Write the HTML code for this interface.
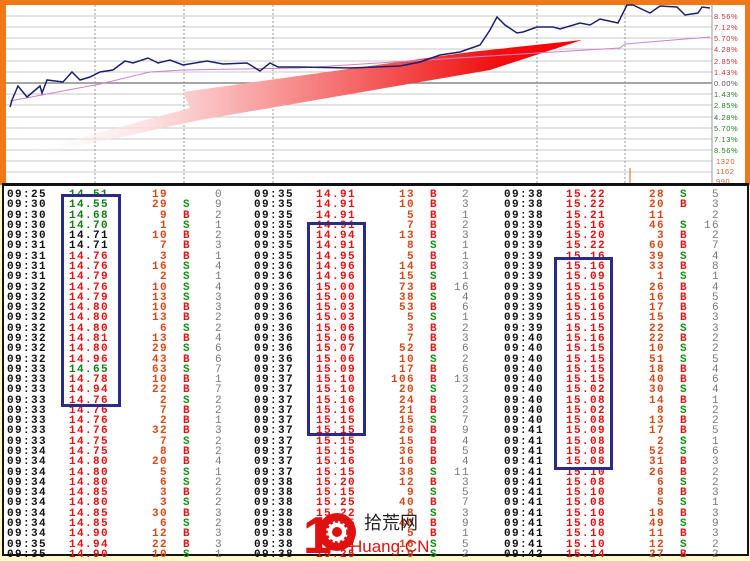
<!DOCTYPE html>
<html><head><meta charset="utf-8"><style>
*{margin:0;padding:0;box-sizing:border-box}
body{width:750px;height:559px;background:#fff8c8;position:relative;overflow:hidden;font-family:"Liberation Mono",monospace}
#chart{position:absolute;left:0;top:0;width:750px;height:185px;background:#fff;border-top:5px solid #f07818;border-left:6px solid #f07818;border-right:5px solid #f07818}
#tbl{position:absolute;left:2px;top:183px;width:747px;height:373px;background:#fff;border:2px solid #111;border-top:3px solid #111}
.col{position:absolute;top:4px}
.r{position:relative;height:10.29px;font-size:11px;line-height:10.29px;font-weight:bold;letter-spacing:1.4px;white-space:nowrap}
.r span{position:absolute;top:0}
.t{left:0;color:#111}
.p{left:62px;color:#e81010}
.g{color:#108010}.k{color:#111}
.v{right:auto;left:128px;width:33px;text-align:right;color:#d84818}
.b{left:176px}
.B{color:#e01818}.S{color:#109010}
.c{left:200px;width:16px;text-align:right;color:#777;font-weight:normal}
.box{position:absolute;border:3px solid #2a2a8c}
</style></head><body>
<div id="chart"></div>
<svg style="position:absolute;left:0;top:0" width="750" height="185">
<defs><linearGradient id="ar" x1="0" y1="0" x2="1" y2="0"><stop offset="0" stop-color="#fff" stop-opacity="0"/><stop offset="0.3" stop-color="#fbd0d0"/><stop offset="0.85" stop-color="#f01010"/><stop offset="1" stop-color="#ff0000"/></linearGradient></defs>
<g stroke="#c8c8c8" stroke-width="1">
<line x1="6" y1="16" x2="712" y2="16"/><line x1="6" y1="27" x2="712" y2="27"/><line x1="6" y1="38" x2="712" y2="38"/><line x1="6" y1="49" x2="712" y2="49"/><line x1="6" y1="61" x2="712" y2="61"/><line x1="6" y1="72" x2="712" y2="72"/>
<line x1="6" y1="94" x2="712" y2="94"/><line x1="6" y1="105" x2="712" y2="105"/><line x1="6" y1="117" x2="712" y2="117"/><line x1="6" y1="128" x2="712" y2="128"/><line x1="6" y1="139" x2="712" y2="139"/><line x1="6" y1="150" x2="712" y2="150"/><line x1="6" y1="161" x2="712" y2="161"/><line x1="6" y1="172" x2="712" y2="172"/>
</g>
<line x1="6" y1="83" x2="712" y2="83" stroke="#888" stroke-width="1.5"/>
<g stroke="#999" stroke-dasharray="2,2"><line x1="95" y1="5" x2="95" y2="183"/><line x1="184" y1="5" x2="184" y2="183"/><line x1="273" y1="5" x2="273" y2="183"/><line x1="537" y1="5" x2="537" y2="183"/><line x1="625" y1="5" x2="625" y2="183"/></g>
<line x1="712" y1="5" x2="712" y2="183" stroke="#999"/>
<polygon points="12,156 190,108 183,92 470,52 582,40 490,70 200,120 14,160" fill="url(#ar)"/>
<polyline fill="none" stroke="#d080d0" stroke-width="1" points="10,101 47,94 100,84 150,72 183,70 300,68 537,53 620,48 625,44 710,37"/>
<polyline fill="none" stroke="#1a2070" stroke-width="1.5" points="10,107 12,100 18,86 27,97 40,86 42,93 47,80 63,82 72,72 80,80 90,77 100,72 113,70 125,61 133,63 148,58 158,63 170,60 183,65 207,61 223,64 247,63 260,71 270,63 278,67 300,67 350,68 400,66 420,62 440,55 460,52 480,45 490,30 497,17 505,25 517,33 523,32 537,27 553,27 560,29 580,23 590,25 600,19 618,23 627,5 633,5 650,13 660,6 677,7 685,15 698,13 702,7 710,8"/>
<line x1="630" y1="168" x2="630" y2="183" stroke="#e06020"/>
<g font-family="Liberation Sans,sans-serif" font-size="7.5" letter-spacing="0.6">
<text x="714" y="19" fill="#d03030">8.56%</text><text x="714" y="30" fill="#d03030">7.12%</text><text x="714" y="41" fill="#d03030">5.70%</text><text x="714" y="52" fill="#d03030">4.28%</text><text x="714" y="64" fill="#d03030">2.85%</text><text x="714" y="75" fill="#d03030">1.43%</text><text x="714" y="86" fill="#555">0.00%</text>
<text x="714" y="97" fill="#208020">1.43%</text><text x="714" y="108" fill="#208020">2.85%</text><text x="714" y="120" fill="#208020">4.28%</text><text x="714" y="131" fill="#208020">5.70%</text><text x="714" y="142" fill="#208020">7.13%</text><text x="714" y="153" fill="#208020">8.56%</text>
<text x="716" y="164" fill="#d06030">1320</text><text x="716" y="174" fill="#d06030">1162</text><text x="716" y="184" fill="#d06030">990</text>
</g>
</svg>
<div id="tbl">
<div class="col" style="left:3px">
<div class="r"><span class="t">09:25</span><span class="p g">14.51</span><span class="v">19</span><span class="b"></span><span class="c">0</span></div>
<div class="r"><span class="t">09:30</span><span class="p g">14.55</span><span class="v">29</span><span class="b S">S</span><span class="c">9</span></div>
<div class="r"><span class="t">09:30</span><span class="p g">14.68</span><span class="v">9</span><span class="b B">B</span><span class="c">2</span></div>
<div class="r"><span class="t">09:30</span><span class="p g">14.70</span><span class="v">1</span><span class="b S">S</span><span class="c">1</span></div>
<div class="r"><span class="t">09:30</span><span class="p k">14.71</span><span class="v">10</span><span class="b B">B</span><span class="c">2</span></div>
<div class="r"><span class="t">09:31</span><span class="p k">14.71</span><span class="v">7</span><span class="b B">B</span><span class="c">3</span></div>
<div class="r"><span class="t">09:31</span><span class="p">14.76</span><span class="v">3</span><span class="b B">B</span><span class="c">1</span></div>
<div class="r"><span class="t">09:31</span><span class="p">14.76</span><span class="v">16</span><span class="b S">S</span><span class="c">4</span></div>
<div class="r"><span class="t">09:31</span><span class="p">14.79</span><span class="v">2</span><span class="b S">S</span><span class="c">1</span></div>
<div class="r"><span class="t">09:32</span><span class="p">14.76</span><span class="v">10</span><span class="b S">S</span><span class="c">4</span></div>
<div class="r"><span class="t">09:32</span><span class="p">14.79</span><span class="v">13</span><span class="b S">S</span><span class="c">3</span></div>
<div class="r"><span class="t">09:32</span><span class="p">14.80</span><span class="v">10</span><span class="b B">B</span><span class="c">3</span></div>
<div class="r"><span class="t">09:32</span><span class="p">14.80</span><span class="v">13</span><span class="b B">B</span><span class="c">2</span></div>
<div class="r"><span class="t">09:32</span><span class="p">14.80</span><span class="v">6</span><span class="b S">S</span><span class="c">2</span></div>
<div class="r"><span class="t">09:32</span><span class="p">14.81</span><span class="v">13</span><span class="b B">B</span><span class="c">4</span></div>
<div class="r"><span class="t">09:32</span><span class="p">14.80</span><span class="v">29</span><span class="b S">S</span><span class="c">6</span></div>
<div class="r"><span class="t">09:32</span><span class="p">14.96</span><span class="v">43</span><span class="b B">B</span><span class="c">6</span></div>
<div class="r"><span class="t">09:33</span><span class="p g">14.65</span><span class="v">63</span><span class="b S">S</span><span class="c">7</span></div>
<div class="r"><span class="t">09:33</span><span class="p">14.78</span><span class="v">10</span><span class="b B">B</span><span class="c">1</span></div>
<div class="r"><span class="t">09:33</span><span class="p">14.94</span><span class="v">22</span><span class="b B">B</span><span class="c">7</span></div>
<div class="r"><span class="t">09:33</span><span class="p">14.76</span><span class="v">2</span><span class="b S">S</span><span class="c">2</span></div>
<div class="r"><span class="t">09:33</span><span class="p">14.76</span><span class="v">7</span><span class="b B">B</span><span class="c">2</span></div>
<div class="r"><span class="t">09:33</span><span class="p">14.76</span><span class="v">2</span><span class="b B">B</span><span class="c">1</span></div>
<div class="r"><span class="t">09:33</span><span class="p">14.76</span><span class="v">32</span><span class="b B">B</span><span class="c">3</span></div>
<div class="r"><span class="t">09:33</span><span class="p">14.75</span><span class="v">7</span><span class="b S">S</span><span class="c">2</span></div>
<div class="r"><span class="t">09:34</span><span class="p">14.75</span><span class="v">8</span><span class="b B">B</span><span class="c">2</span></div>
<div class="r"><span class="t">09:34</span><span class="p">14.80</span><span class="v">20</span><span class="b B">B</span><span class="c">4</span></div>
<div class="r"><span class="t">09:34</span><span class="p">14.80</span><span class="v">5</span><span class="b S">S</span><span class="c">1</span></div>
<div class="r"><span class="t">09:34</span><span class="p">14.80</span><span class="v">6</span><span class="b S">S</span><span class="c">2</span></div>
<div class="r"><span class="t">09:34</span><span class="p">14.85</span><span class="v">3</span><span class="b B">B</span><span class="c">2</span></div>
<div class="r"><span class="t">09:34</span><span class="p">14.80</span><span class="v">3</span><span class="b S">S</span><span class="c">2</span></div>
<div class="r"><span class="t">09:34</span><span class="p">14.85</span><span class="v">30</span><span class="b B">B</span><span class="c">3</span></div>
<div class="r"><span class="t">09:34</span><span class="p">14.85</span><span class="v">6</span><span class="b S">S</span><span class="c">2</span></div>
<div class="r"><span class="t">09:34</span><span class="p">14.90</span><span class="v">12</span><span class="b B">B</span><span class="c">3</span></div>
<div class="r"><span class="t">09:35</span><span class="p">14.94</span><span class="v">22</span><span class="b B">B</span><span class="c">3</span></div>
<div class="r"><span class="t">09:35</span><span class="p">14.90</span><span class="v">10</span><span class="b S">S</span><span class="c">1</span></div>
</div>
<div class="col" style="left:250px">
<div class="r"><span class="t">09:35</span><span class="p">14.91</span><span class="v">13</span><span class="b B">B</span><span class="c">2</span></div>
<div class="r"><span class="t">09:35</span><span class="p">14.91</span><span class="v">10</span><span class="b B">B</span><span class="c">3</span></div>
<div class="r"><span class="t">09:35</span><span class="p">14.91</span><span class="v">5</span><span class="b B">B</span><span class="c">1</span></div>
<div class="r"><span class="t">09:35</span><span class="p">14.91</span><span class="v">7</span><span class="b B">B</span><span class="c">2</span></div>
<div class="r"><span class="t">09:35</span><span class="p">14.94</span><span class="v">13</span><span class="b B">B</span><span class="c">3</span></div>
<div class="r"><span class="t">09:35</span><span class="p">14.91</span><span class="v">8</span><span class="b S">S</span><span class="c">1</span></div>
<div class="r"><span class="t">09:35</span><span class="p">14.95</span><span class="v">5</span><span class="b B">B</span><span class="c">1</span></div>
<div class="r"><span class="t">09:36</span><span class="p">14.96</span><span class="v">14</span><span class="b B">B</span><span class="c">3</span></div>
<div class="r"><span class="t">09:36</span><span class="p">14.96</span><span class="v">15</span><span class="b S">S</span><span class="c">1</span></div>
<div class="r"><span class="t">09:36</span><span class="p">15.00</span><span class="v">73</span><span class="b B">B</span><span class="c">16</span></div>
<div class="r"><span class="t">09:36</span><span class="p">15.00</span><span class="v">38</span><span class="b S">S</span><span class="c">4</span></div>
<div class="r"><span class="t">09:36</span><span class="p">15.03</span><span class="v">53</span><span class="b B">B</span><span class="c">6</span></div>
<div class="r"><span class="t">09:36</span><span class="p">15.03</span><span class="v">5</span><span class="b S">S</span><span class="c">1</span></div>
<div class="r"><span class="t">09:36</span><span class="p">15.06</span><span class="v">3</span><span class="b B">B</span><span class="c">2</span></div>
<div class="r"><span class="t">09:36</span><span class="p">15.06</span><span class="v">7</span><span class="b B">B</span><span class="c">3</span></div>
<div class="r"><span class="t">09:36</span><span class="p">15.07</span><span class="v">52</span><span class="b B">B</span><span class="c">6</span></div>
<div class="r"><span class="t">09:36</span><span class="p">15.06</span><span class="v">10</span><span class="b S">S</span><span class="c">2</span></div>
<div class="r"><span class="t">09:37</span><span class="p">15.09</span><span class="v">17</span><span class="b B">B</span><span class="c">6</span></div>
<div class="r"><span class="t">09:37</span><span class="p">15.10</span><span class="v">106</span><span class="b B">B</span><span class="c">13</span></div>
<div class="r"><span class="t">09:37</span><span class="p">15.10</span><span class="v">20</span><span class="b S">S</span><span class="c">2</span></div>
<div class="r"><span class="t">09:37</span><span class="p">15.16</span><span class="v">24</span><span class="b B">B</span><span class="c">3</span></div>
<div class="r"><span class="t">09:37</span><span class="p">15.16</span><span class="v">21</span><span class="b B">B</span><span class="c">2</span></div>
<div class="r"><span class="t">09:37</span><span class="p">15.15</span><span class="v">15</span><span class="b S">S</span><span class="c">7</span></div>
<div class="r"><span class="t">09:37</span><span class="p">15.15</span><span class="v">26</span><span class="b B">B</span><span class="c">9</span></div>
<div class="r"><span class="t">09:37</span><span class="p">15.15</span><span class="v">15</span><span class="b B">B</span><span class="c">4</span></div>
<div class="r"><span class="t">09:37</span><span class="p">15.15</span><span class="v">36</span><span class="b B">B</span><span class="c">5</span></div>
<div class="r"><span class="t">09:37</span><span class="p">15.16</span><span class="v">16</span><span class="b B">B</span><span class="c">4</span></div>
<div class="r"><span class="t">09:37</span><span class="p">15.15</span><span class="v">38</span><span class="b S">S</span><span class="c">11</span></div>
<div class="r"><span class="t">09:38</span><span class="p">15.20</span><span class="v">12</span><span class="b B">B</span><span class="c">3</span></div>
<div class="r"><span class="t">09:38</span><span class="p">15.15</span><span class="v">9</span><span class="b S">S</span><span class="c">5</span></div>
<div class="r"><span class="t">09:38</span><span class="p">15.25</span><span class="v">40</span><span class="b B">B</span><span class="c">7</span></div>
<div class="r"><span class="t">09:38</span><span class="p">15.22</span><span class="v">8</span><span class="b S">S</span><span class="c">3</span></div>
<div class="r"><span class="t">09:38</span><span class="p">15.25</span><span class="v">40</span><span class="b B">B</span><span class="c">9</span></div>
<div class="r"><span class="t">09:38</span><span class="p">15.25</span><span class="v">5</span><span class="b B">B</span><span class="c">1</span></div>
<div class="r"><span class="t">09:38</span><span class="p">15.22</span><span class="v">16</span><span class="b S">S</span><span class="c">5</span></div>
<div class="r"><span class="t">09:38</span><span class="p">15.25</span><span class="v">9</span><span class="b S">S</span><span class="c">2</span></div>
</div>
<div class="col" style="left:500px">
<div class="r"><span class="t">09:38</span><span class="p">15.22</span><span class="v">28</span><span class="b S">S</span><span class="c">5</span></div>
<div class="r"><span class="t">09:38</span><span class="p">15.22</span><span class="v">20</span><span class="b B">B</span><span class="c">3</span></div>
<div class="r"><span class="t">09:38</span><span class="p">15.21</span><span class="v">11</span><span class="b"></span><span class="c">2</span></div>
<div class="r"><span class="t">09:39</span><span class="p">15.16</span><span class="v">46</span><span class="b S">S</span><span class="c">16</span></div>
<div class="r"><span class="t">09:39</span><span class="p">15.20</span><span class="v">3</span><span class="b B">B</span><span class="c">2</span></div>
<div class="r"><span class="t">09:39</span><span class="p">15.22</span><span class="v">60</span><span class="b B">B</span><span class="c">7</span></div>
<div class="r"><span class="t">09:39</span><span class="p">15.16</span><span class="v">39</span><span class="b S">S</span><span class="c">4</span></div>
<div class="r"><span class="t">09:39</span><span class="p">15.16</span><span class="v">33</span><span class="b B">B</span><span class="c">8</span></div>
<div class="r"><span class="t">09:39</span><span class="p">15.09</span><span class="v">1</span><span class="b S">S</span><span class="c">1</span></div>
<div class="r"><span class="t">09:39</span><span class="p">15.15</span><span class="v">26</span><span class="b B">B</span><span class="c">4</span></div>
<div class="r"><span class="t">09:39</span><span class="p">15.16</span><span class="v">16</span><span class="b B">B</span><span class="c">5</span></div>
<div class="r"><span class="t">09:39</span><span class="p">15.16</span><span class="v">17</span><span class="b B">B</span><span class="c">6</span></div>
<div class="r"><span class="t">09:39</span><span class="p">15.15</span><span class="v">15</span><span class="b B">B</span><span class="c">3</span></div>
<div class="r"><span class="t">09:39</span><span class="p">15.15</span><span class="v">22</span><span class="b S">S</span><span class="c">3</span></div>
<div class="r"><span class="t">09:40</span><span class="p">15.16</span><span class="v">22</span><span class="b B">B</span><span class="c">2</span></div>
<div class="r"><span class="t">09:40</span><span class="p">15.15</span><span class="v">10</span><span class="b S">S</span><span class="c">2</span></div>
<div class="r"><span class="t">09:40</span><span class="p">15.15</span><span class="v">51</span><span class="b S">S</span><span class="c">5</span></div>
<div class="r"><span class="t">09:40</span><span class="p">15.15</span><span class="v">18</span><span class="b B">B</span><span class="c">4</span></div>
<div class="r"><span class="t">09:40</span><span class="p">15.15</span><span class="v">40</span><span class="b B">B</span><span class="c">6</span></div>
<div class="r"><span class="t">09:40</span><span class="p">15.02</span><span class="v">30</span><span class="b S">S</span><span class="c">4</span></div>
<div class="r"><span class="t">09:40</span><span class="p">15.08</span><span class="v">14</span><span class="b B">B</span><span class="c">1</span></div>
<div class="r"><span class="t">09:40</span><span class="p">15.02</span><span class="v">8</span><span class="b S">S</span><span class="c">2</span></div>
<div class="r"><span class="t">09:40</span><span class="p">15.08</span><span class="v">13</span><span class="b B">B</span><span class="c">2</span></div>
<div class="r"><span class="t">09:41</span><span class="p">15.09</span><span class="v">17</span><span class="b B">B</span><span class="c">5</span></div>
<div class="r"><span class="t">09:41</span><span class="p">15.08</span><span class="v">2</span><span class="b S">S</span><span class="c">1</span></div>
<div class="r"><span class="t">09:41</span><span class="p">15.08</span><span class="v">52</span><span class="b S">S</span><span class="c">6</span></div>
<div class="r"><span class="t">09:41</span><span class="p">15.08</span><span class="v">31</span><span class="b B">B</span><span class="c">3</span></div>
<div class="r"><span class="t">09:41</span><span class="p">15.10</span><span class="v">26</span><span class="b B">B</span><span class="c">2</span></div>
<div class="r"><span class="t">09:41</span><span class="p">15.08</span><span class="v">6</span><span class="b S">S</span><span class="c">2</span></div>
<div class="r"><span class="t">09:41</span><span class="p">15.10</span><span class="v">8</span><span class="b B">B</span><span class="c">3</span></div>
<div class="r"><span class="t">09:41</span><span class="p">15.08</span><span class="v">5</span><span class="b S">S</span><span class="c">1</span></div>
<div class="r"><span class="t">09:41</span><span class="p">15.10</span><span class="v">18</span><span class="b B">B</span><span class="c">3</span></div>
<div class="r"><span class="t">09:41</span><span class="p">15.08</span><span class="v">49</span><span class="b S">S</span><span class="c">9</span></div>
<div class="r"><span class="t">09:41</span><span class="p">15.10</span><span class="v">11</span><span class="b B">B</span><span class="c">3</span></div>
<div class="r"><span class="t">09:41</span><span class="p">15.10</span><span class="v">12</span><span class="b S">S</span><span class="c">2</span></div>
<div class="r"><span class="t">09:42</span><span class="p">15.14</span><span class="v">27</span><span class="b B">B</span><span class="c">2</span></div>
</div>
</div>
<div class="box" style="left:61px;top:194px;width:60px;height:213px"></div>
<div class="box" style="left:307px;top:222px;width:59px;height:214px"></div>
<div class="box" style="left:554px;top:257px;width:59px;height:213px"></div>
<svg style="position:absolute;left:300px;top:505px" width="140" height="52">
<text x="3" y="48" font-family="Liberation Sans,sans-serif" font-weight="bold" font-size="52" fill="#e01010" letter-spacing="-4">1</text>
<circle cx="37" cy="27" r="19" fill="#e01010"/>
<circle cx="37" cy="27" r="11" fill="#fff" stroke="#e01010" stroke-width="3.5" stroke-dasharray="3,2.5"/>
<circle cx="37" cy="27" r="5" fill="#e01010"/>
<text x="64" y="24" font-family="Noto Sans CJK SC,sans-serif" font-size="18" fill="#222">拾荒网</text>
<text x="50" y="47" font-family="Liberation Sans,sans-serif" font-size="17" fill="#e01010">Huang.CN</text>
</svg>
</body></html>
